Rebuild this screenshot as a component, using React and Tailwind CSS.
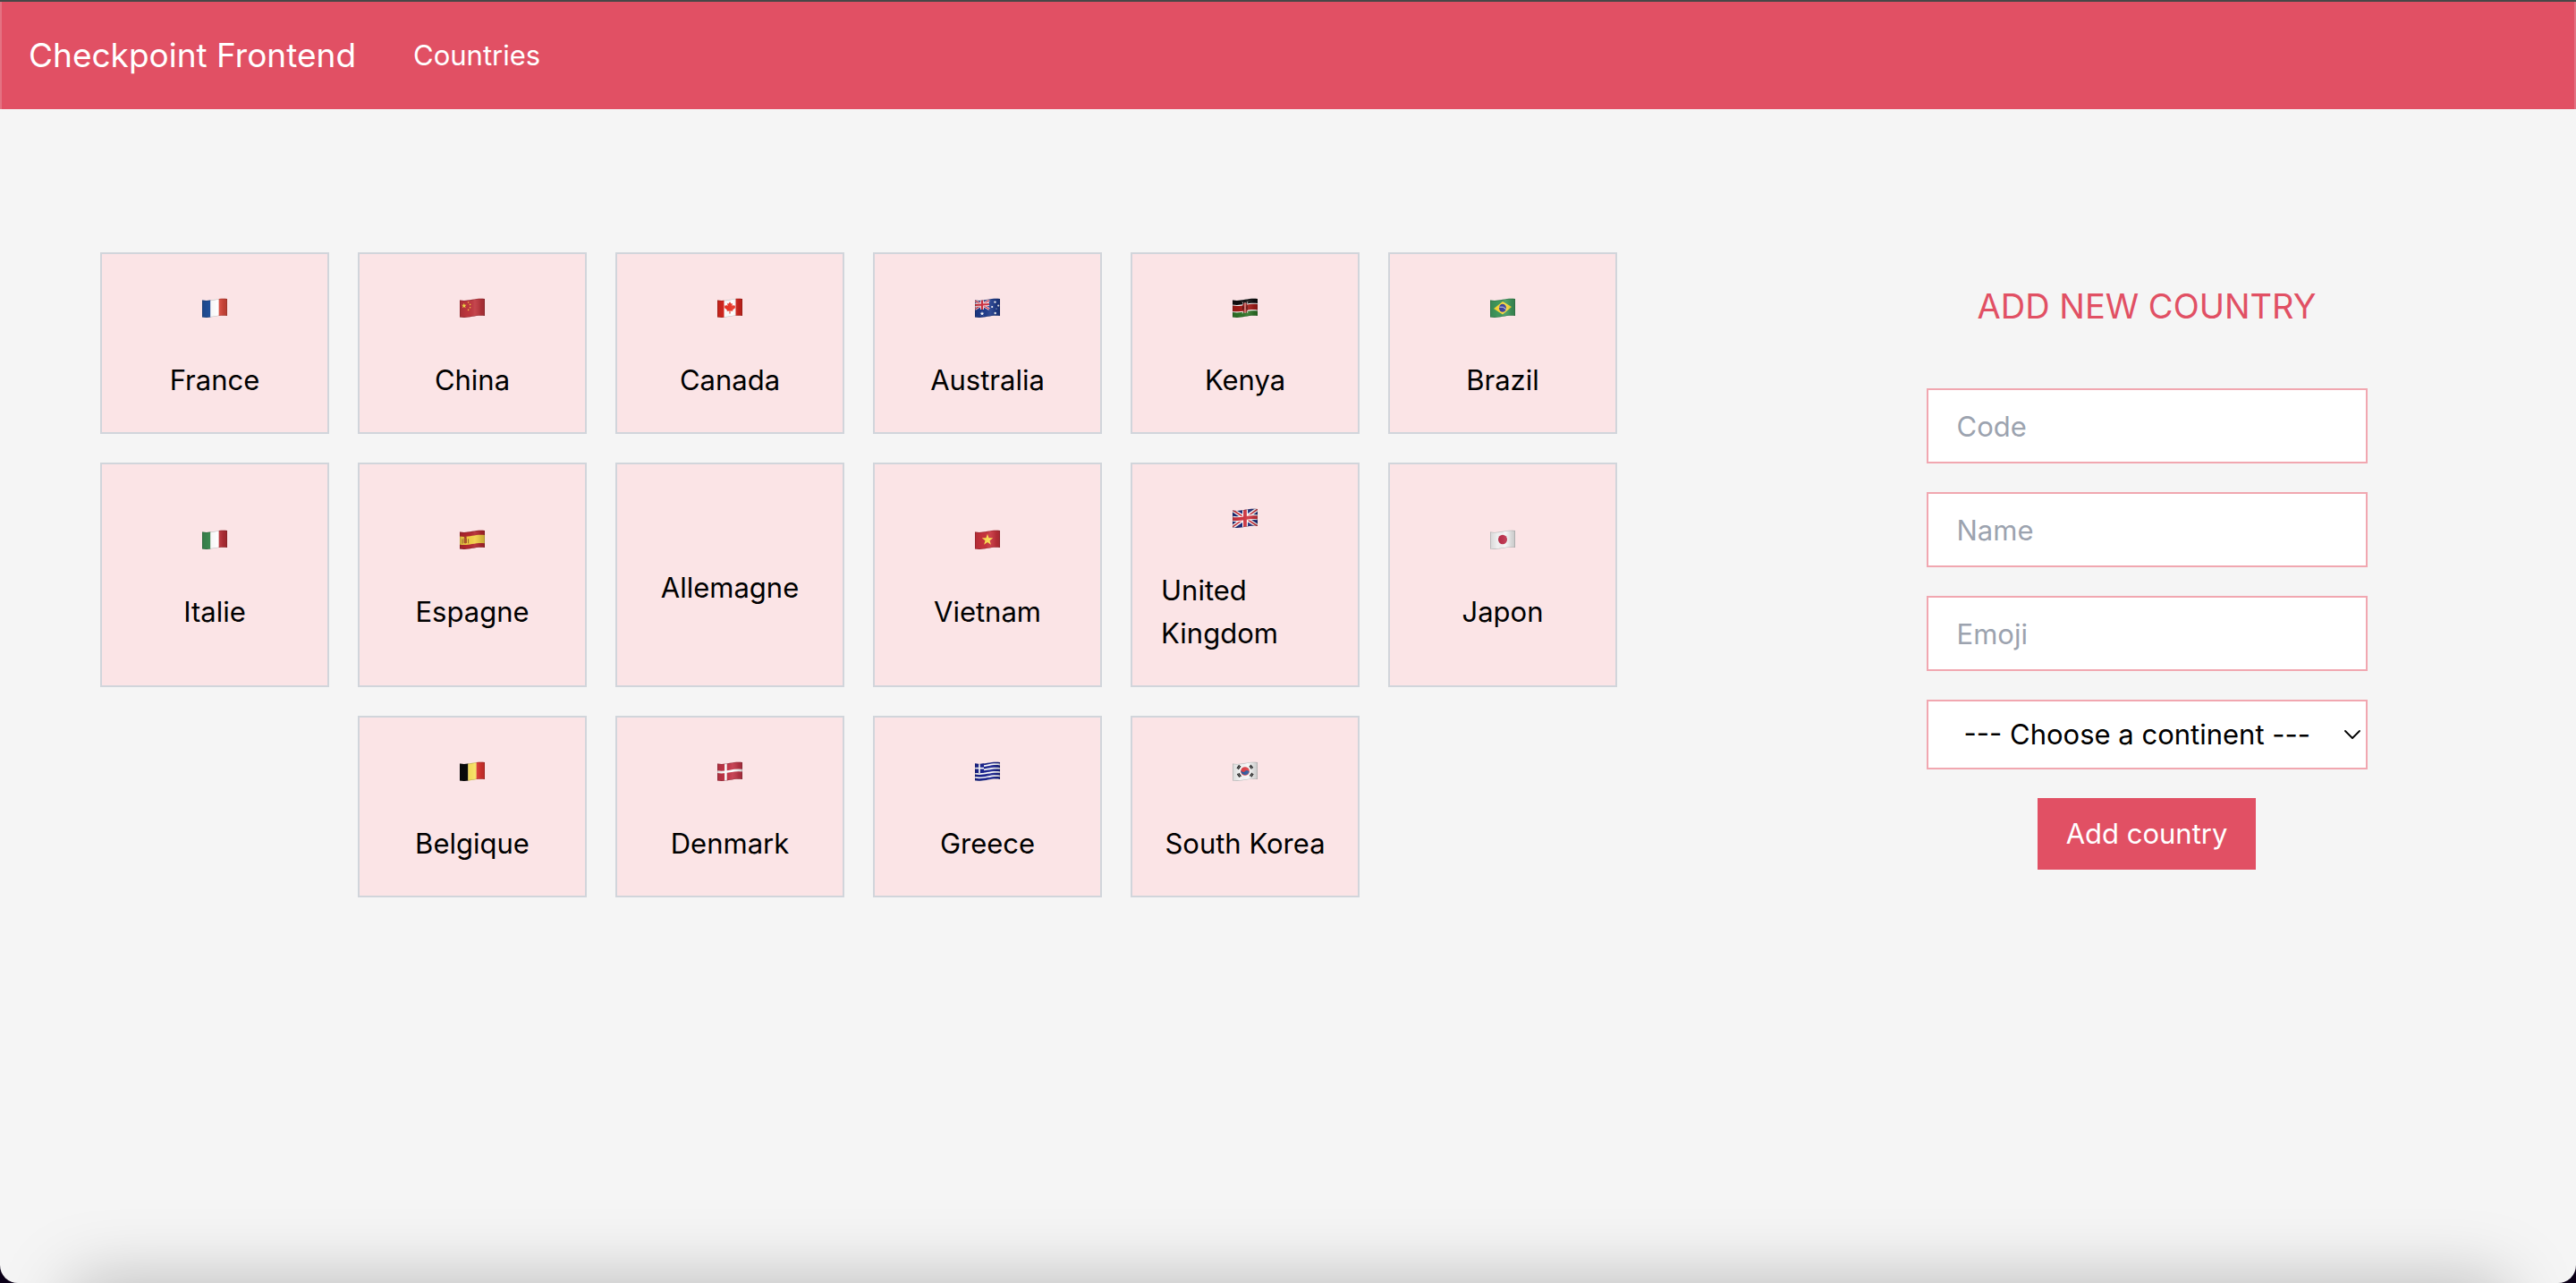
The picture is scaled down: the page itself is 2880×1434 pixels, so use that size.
import React from "react";

const RED = "#c8323c";

/* Curve followed by the cloth of a waving flag, at height y. */
const wave = (y) =>
  `M0 ${y + 1.5} C5 ${y + 2.3} 9 ${y + 1.8} 14 ${y + 0.8} S23 ${y - 0.6} 28 ${y}`;
const back = (y) =>
  `L28 ${y} C23 ${y - 0.6} 19 ${y - 0.2} 14 ${y + 0.8} S5 ${y + 2.3} 0 ${y + 1.5} Z`;
const CLOTH = wave(1) + " " + back(20);

function Band({ from, to, fill }) {
  return <path d={wave(from) + " " + back(to)} fill={fill} />;
}

function Star({ x, y, r, fill }) {
  const points = Array.from({ length: 10 }, (_, i) => {
    const radius = i % 2 ? r * 0.4 : r;
    const angle = (Math.PI / 5) * i - Math.PI / 2;
    return `${x + radius * Math.cos(angle)},${y + radius * Math.sin(angle)}`;
  }).join(" ");
  return <polygon points={points} fill={fill} />;
}

function Columns({ colors }) {
  return colors.map((color, i) => (
    <rect key={i} x={(28 / 3) * i} y="0" width="9.5" height="23" fill={color} />
  ));
}

function UnionJack() {
  return (
    <>
      <rect width="28" height="23" fill="#1c2a7a" />
      <path d="M0 2 L28 20 M0 21 L28 1" stroke="#fff" strokeWidth="4.4" />
      <path d="M0 2 L28 20 M0 21 L28 1" stroke="#d0303c" strokeWidth="1.5" />
      <path d="M14 0 V23" stroke="#fff" strokeWidth="6" />
      <path d={wave(10.3)} stroke="#fff" strokeWidth="6" fill="none" />
      <path d="M14 0 V23" stroke="#cf3440" strokeWidth="3.8" />
      <path d={wave(10.3)} stroke="#cf3440" strokeWidth="3.8" fill="none" />
    </>
  );
}

const FLAGS = {
  France: <Columns colors={["#21509b", "#ffffff", "#dc4a3d"]} />,
  Italie: <Columns colors={["#3c8a50", "#ffffff", "#bb3038"]} />,
  Belgique: <Columns colors={["#0a0a0a", "#f8e15e", "#e03530"]} />,
  China: (
    <>
      <rect width="28" height="23" fill="#c0363e" />
      <Star x={4.8} y={8.7} r={3} fill="#fbe84a" />
      <circle cx="9.6" cy="5" r="0.8" fill="#f5c844" />
      <circle cx="11.6" cy="7.4" r="0.8" fill="#f5c844" />
      <circle cx="11.6" cy="10.8" r="0.8" fill="#f5c844" />
      <circle cx="9.6" cy="13.4" r="0.8" fill="#f5c844" />
    </>
  ),
  Canada: (
    <>
      <rect width="28" height="23" fill="#fff" />
      <rect width="7.5" height="23" fill="#d7271f" />
      <rect x="20.5" width="7.5" height="23" fill="#d7271f" />
      <path
        d="M14 4.2 l1.4 2.4 1.5-.7 -.5 3 1.6-1.2 .5 1 1.7-.2 -.6 1.8 .8.5 -3.3 2.8 .3 1.2 -3-.4 .2 3.2 h-1.2 l.2-3.2 -3 .4 .3-1.2 -3.3-2.8 .8-.5 -.6-1.8 1.7.2 .5-1 1.6 1.2 -.5-3 1.5.7z"
        fill="#ea3323"
      />
    </>
  ),
  Australia: (
    <>
      <rect width="28" height="23" fill="#1f3c8c" />
      <path d="M0 3 L16 12.5 M0 12.5 L16 2.5" stroke="#f0d8e2" strokeWidth="2.8" />
      <path d="M0 3 L16 12.5 M0 12.5 L16 2.5" stroke="#d0384c" strokeWidth="1.1" />
      <path d="M8 1 V13 M0 8 L16 7" stroke="#f4e3e9" strokeWidth="4" />
      <path d="M8 1 V13 M0 8 L16 7" stroke="#d0303f" strokeWidth="2.2" />
      <Star x={8} y={17.6} r={2.5} fill="#fff" />
      <circle cx="22.5" cy="4.6" r="1.2" fill="#fff" />
      <circle cx="19.2" cy="10" r="1.1" fill="#fff" />
      <circle cx="26.2" cy="8.6" r="1.1" fill="#fff" />
      <circle cx="24" cy="12" r="0.6" fill="#fff" />
      <circle cx="22.7" cy="17" r="1.2" fill="#fff" />
    </>
  ),
  Kenya: (
    <>
      <rect width="28" height="23" fill="#fff" />
      <Band from={0} to={6} fill="#101010" />
      <Band from={7.1} to={13.4} fill="#a31d18" />
      <Band from={14.5} to={21} fill="#2f7428" />
      <path d="M11 4.5 L17 17 M17 4 L11 17.5" stroke="#f2dede" strokeWidth="0.8" />
      <ellipse cx="14" cy="11" rx="3" ry="5.8" fill="#981a18" />
      <path d="M11.6 7.6 Q13.4 11 11.6 14.4 Z M16.4 7.6 Q14.6 11 16.4 14.4 Z" fill="#1a0c0c" />
      <path d="M14 5 V17" stroke="#f6b9b4" strokeWidth="1.1" />
    </>
  ),
  Brazil: (
    <>
      <rect width="28" height="23" fill="#419a5e" />
      <path d="M4 12 L14 4 L24 10 L14 18.6 Z" fill="#fbd83b" />
      <ellipse cx="14" cy="11.2" rx="4" ry="4.5" fill="#3a3f9a" />
      <path d="M10.3 10.2 Q14.5 9 17.8 12.6" stroke="#dfe6f2" strokeWidth="0.9" fill="none" />
    </>
  ),
  Espagne: (
    <>
      <rect width="28" height="23" fill="#b3272f" />
      <Band from={6} to={15.2} fill="#f3cf45" />
      <path d="M4.6 9.6 h3.4 v5.2 q-1.7 1.6 -3.4 0z" fill="#b0582d" />
      <path d="M3 10.5 V15.6 M9.6 10.3 V15.4" stroke="#9b6332" strokeWidth="1" />
      <circle cx="6.3" cy="8.6" r="1.3" fill="#a83a2a" />
    </>
  ),
  Vietnam: (
    <>
      <rect width="28" height="23" fill={RED} />
      <Star x={14} y={11.4} r={6.6} fill="#fbdf4e" />
    </>
  ),
  "United Kingdom": <UnionJack />,
  Japon: (
    <>
      <rect width="28" height="23" fill="#f4f4f4" />
      <ellipse cx="14" cy="11" rx="5" ry="5.3" fill="#bc2f4a" />
    </>
  ),
  Denmark: (
    <>
      <rect width="28" height="23" fill="#c23648" />
      <path d="M9.4 0 V23" stroke="#fff" strokeWidth="2.6" />
      <path d={wave(10.2)} stroke="#fff" strokeWidth="2.8" fill="none" />
    </>
  ),
  Greece: (
    <>
      <rect width="28" height="23" fill="#fff" />
      {[0, 4.4, 8.7, 13, 17.3].map((y) => (
        <Band key={y} from={y} to={y + 2.6} fill="#1b2390" />
      ))}
      <path d="M0 1.5 H10 V12.4 L0 13 Z" fill="#1b2390" />
      <path d="M5 2 V13 M0 7.7 H10" stroke="#fff" strokeWidth="1.7" />
    </>
  ),
  "South Korea": (
    <>
      <rect width="28" height="23" fill="#f7f7f7" />
      <circle cx="14" cy="11" r="4.8" fill="#dd3f46" />
      <path d="M9.3 10 Q11.7 13.4 14 11 T18.7 11.5 A4.8 4.8 0 0 1 9.3 10 Z" fill="#2c5a9e" />
      <path
        d="M5 7.8 L7.6 4.2 M6.3 8.8 L8.9 5.2 M20 4 L22.8 7.4 M19 5.2 L21.4 8.4 M5.4 14 L8 17.6 M6.9 13.2 L9.4 16.8 M19.4 16.4 L22 13 M20.8 17.4 L23.2 14"
        stroke="#222"
        strokeWidth="1.3"
      />
    </>
  ),
};

const COUNTRIES = [
  "France",
  "China",
  "Canada",
  "Australia",
  "Kenya",
  "Brazil",
  "Italie",
  "Espagne",
  "Allemagne",
  "Vietnam",
  "United Kingdom",
  "Japon",
  "Belgique",
  "Denmark",
  "Greece",
  "South Korea",
];

function FlagDefs() {
  return (
    <svg className="absolute h-0 w-0" aria-hidden="true">
      <defs>
        <clipPath id="cloth">
          <path d={CLOTH} />
        </clipPath>
        <linearGradient id="shade" x1="0" x2="1" y1="0" y2="0">
          <stop offset="0" stopColor="#000" stopOpacity="0.12" />
          <stop offset="0.3" stopColor="#000" stopOpacity="0.02" />
          <stop offset="0.6" stopColor="#fff" stopOpacity="0.08" />
          <stop offset="0.85" stopColor="#000" stopOpacity="0.12" />
          <stop offset="1" stopColor="#000" stopOpacity="0.18" />
        </linearGradient>
      </defs>
    </svg>
  );
}

function Flag({ country }) {
  return (
    <div className="flex h-[55px] items-center">
      <svg viewBox="0 0 28 22" className="h-[22px] w-7" role="img" aria-label={`Flag: ${country}`}>
        <g clipPath="url(#cloth)">
          {FLAGS[country]}
          <rect width="28" height="23" fill="url(#shade)" />
          <path d={CLOTH} fill="none" stroke="#000" strokeOpacity="0.22" strokeWidth="1.2" />
        </g>
      </svg>
    </div>
  );
}

function CountryCard({ country }) {
  return (
    <a
      href="#"
      className="flex w-64 flex-col items-center justify-center gap-[30px] border-2 border-[#d1d5db] bg-[#fbe4e6] p-8"
    >
      {FLAGS[country] ? <Flag country={country} /> : <div />}
      <p className="pb-0.5">{country}</p>
    </a>
  );
}

function Field({ name }) {
  return (
    <input
      type="text"
      aria-label={name}
      placeholder={name}
      className="h-21 w-full border-2 border-[#f1a7b0] bg-white px-8 placeholder:text-[#9ca3af]"
    />
  );
}

function CountryForm() {
  return (
    <form className="mx-auto flex w-[493px] flex-col items-center gap-8">
      <h2 className="mb-8 text-[38px] leading-14 text-[#e15064]">ADD NEW COUNTRY</h2>
      <Field name="Code" />
      <Field name="Name" />
      <Field name="Emoji" />
      <div className="relative w-full">
        <select
          aria-label="Continent"
          className="block h-[78px] w-full appearance-none border-2 border-[#f1a7b0] bg-white pr-12 pl-10"
        >
          <option>--- Choose a continent ---</option>
        </select>
        <svg
          viewBox="0 0 18 10"
          className="pointer-events-none absolute top-1/2 right-2 h-2.5 w-[18px] -translate-y-1/2"
          fill="none"
          stroke="#000"
          strokeWidth="1.8"
          strokeLinecap="round"
          strokeLinejoin="round"
          aria-hidden="true"
        >
          <path d="M1 1 L9 9 L17 1" />
        </svg>
      </div>
      <button type="button" className="h-20 bg-[#e15064] px-8 text-white">
        Add country
      </button>
    </form>
  );
}

export default function App() {
  return (
    <div className="bg-[#0b0018]">
      <div className="relative flex min-h-screen flex-col overflow-hidden rounded-b-[20px] border-t-2 border-[#474747] bg-[#f5f5f5] font-[Inter,sans-serif] text-[31px] leading-12 text-black">
        <FlagDefs />
        <header className="flex h-30 items-center gap-16 border-x-2 border-[#e47282] bg-[#e15064] px-[30px] text-white">
          <h1 className="text-[37px] leading-14">Checkpoint Frontend</h1>
          <nav>
            <a href="#">Countries</a>
          </nav>
        </header>
        <main className="grid grid-cols-3 py-40">
          <section className="col-span-2 flex flex-wrap content-start justify-center gap-8 px-28">
            {COUNTRIES.map((country) => (
              <CountryCard key={country} country={country} />
            ))}
          </section>
          <section className="pt-8">
            <CountryForm />
          </section>
        </main>
        <div className="pointer-events-none absolute inset-x-20 top-full h-40 shadow-[0_0_80px_rgba(0,0,0,0.26)]" />
      </div>
    </div>
  );
}
